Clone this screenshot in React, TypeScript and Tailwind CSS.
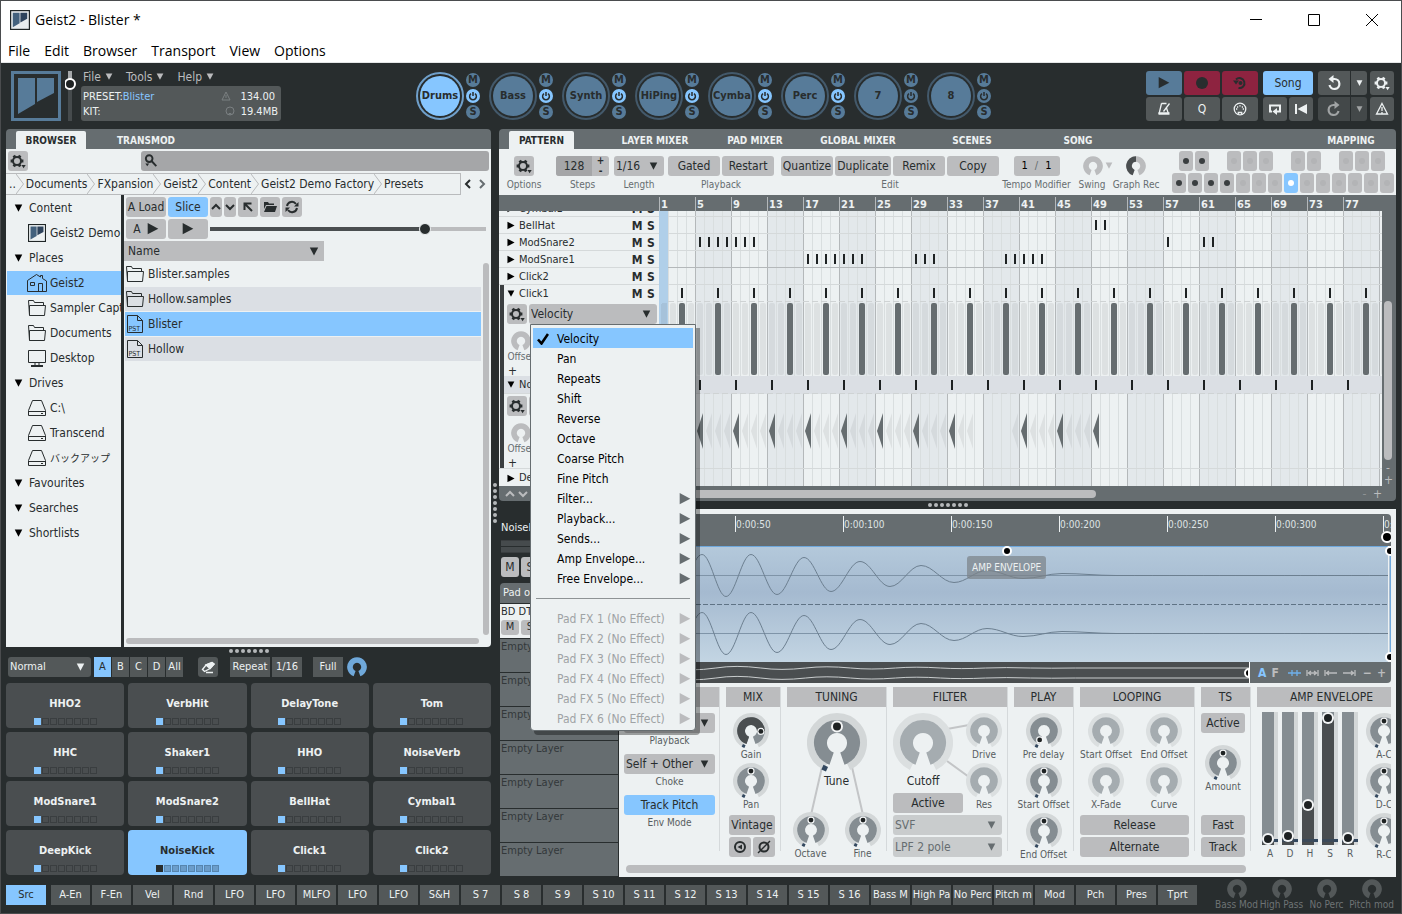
import type { ReactNode } from "react";
import clsx from "clsx";

const ENGINES = [
  { name: "Drums", on: true },
  { name: "Bass", on: true },
  { name: "Synth", on: true },
  { name: "HiPing", on: true },
  { name: "Cymba", on: true },
  { name: "Perc", on: true },
  { name: "7", on: false },
  { name: "8", on: false },
];

const PADS = [
  "HHO2", "VerbHit", "DelayTone", "Tom",
  "HHC", "Shaker1", "HHO", "NoiseVerb",
  "ModSnare1", "ModSnare2", "BellHat", "Cymbal1",
  "DeepKick", "NoiseKick", "Click1", "Click2",
];

const MOD_SOURCES = [
  "A-En", "F-En", "Vel", "Rnd", "LFO", "LFO", "MLFO", "LFO", "LFO", "S&H",
  "S 7", "S 8", "S 9", "S 10", "S 11", "S 12", "S 13", "S 14", "S 15", "S 16",
  "Bass M", "High Pa", "No Perc", "Pitch m", "Mod", "Pch", "Pres", "Tprt",
];

const MENU_ITEMS = [
  "Velocity", "Pan", "Repeats", "Shift", "Reverse", "Octave", "Coarse Pitch", "Fine Pitch",
  "Filter...", "Playback...", "Sends...", "Amp Envelope...", "Free Envelope...",
];

function range(from: number, to: number) {
  return Array.from({ length: to - from + 1 }, (_, i) => from + i);
}

// angle in degrees, 0 at twelve o'clock, clockwise
function polar(angle: number, r: number) {
  const a = (angle * Math.PI) / 180;
  return [30 + r * Math.sin(a), 30 - r * Math.cos(a)];
}

function arc(r: number, from: number, to: number) {
  const [x1, y1] = polar(from, r);
  const [x2, y2] = polar(to, r);
  return `M${x1} ${y1}A${r} ${r} 0 ${to - from > 180 ? 1 : 0} 1 ${x2} ${y2}`;
}

/* ---------- icons ---------- */

function Gear({ className }: { className?: string }) {
  return (
    <svg viewBox="0 0 20 20" className={clsx("size-5", className)} fill="none" stroke="currentColor">
      <circle cx="9" cy="10" r="4" strokeWidth="2" />
      <path strokeWidth="2.8" d="M15.4 10h-2.2M2.600 10h2.2M12.200 4.500l-1.100 1.900M5.800 4.500l1.100 1.900M12.200 15.500l-1.100-1.900M5.800 15.500l1.100-1.900" />
      <path d="M13.5 14h4.2l-2.1 3.2z" fill="currentColor" stroke="none" />
    </svg>
  );
}

function Down({ className = "w-[10px]" }: { className?: string }) {
  return (
    <svg viewBox="0 0 10 9" className={clsx("shrink-0", className)} fill="currentColor">
      <path d="M0.8 0.5h8.4L5 8.5z" />
    </svg>
  );
}

function Right({ className = "w-[9px]" }: { className?: string }) {
  return (
    <svg viewBox="0 0 9 10" className={clsx("shrink-0", className)} fill="currentColor">
      <path d="M0.5 0.8v8.4L8.5 5z" />
    </svg>
  );
}

function FolderIcon() {
  return (
    <svg viewBox="0 0 20 20" className="size-5 shrink-0" fill="none" stroke="currentColor">
      <path d="M2.5 17.5L1.500 2.500h5l1 2h9v3M2.500 17.500V7.500h16l-1 10z" />
    </svg>
  );
}

function PresetFileIcon() {
  return (
    <svg viewBox="0 0 20 20" className="size-5 shrink-0" fill="none" stroke="currentColor">
      <path d="M2.5 1.5h10l5 5v12h-15zM12.5 1.5v5h5" />
      <text x="3.5" y="16.5" fontSize="7" fill="currentColor" stroke="none" fontFamily="DejaVu Sans Condensed, sans-serif">PST</text>
    </svg>
  );
}

function HomeIcon() {
  return (
    <svg viewBox="0 0 22 20" className="h-5 w-[22px] shrink-0" fill="none" stroke="currentColor">
      <path d="M1.5 18.5v-11l9-6 4 2.5V2.5h2v3l4 2.5v10.5zM4.5 9.5h4v3h-4zM12.5 18.5v-8h4v8" />
    </svg>
  );
}

function MonitorIcon() {
  return (
    <svg viewBox="0 0 20 20" className="size-5 shrink-0" fill="none" stroke="currentColor">
      <path d="M1.5 2.5h17v12h-17zM8 14.5v3M12 14.5v3" />
      <path d="M4 18h12" strokeWidth="2" />
    </svg>
  );
}

function DriveIcon() {
  return (
    <svg viewBox="0 0 20 20" className="size-5 shrink-0" fill="none" stroke="currentColor">
      <path d="M5.5 2.5h9l4 10v5h-17v-5zM1.5 13.5h17M14 15.5h2" />
    </svg>
  );
}

function Logo({ className, frame, left, right, bg }: { className: string; frame: string; left: string; right: string; bg: string }) {
  return (
    <svg viewBox="0 0 50 50" className={clsx("shrink-0", className)}>
      <rect x="1.5" y="1.5" width="47" height="47" fill={bg} stroke={frame} strokeWidth="3" />
      <path d="M7 7h17v26L7 43z" fill={left} />
      <path d="M26 7h17v15L26 31z" fill={right} />
    </svg>
  );
}

function Chevron({ d, className }: { d: string; className?: string }) {
  return (
    <svg viewBox="0 0 10 10" className={clsx("size-[10px]", className)} fill="none" stroke="currentColor" strokeWidth="2">
      <path d={d} />
    </svg>
  );
}

function PowerIcon() {
  return (
    <svg viewBox="0 0 14 14" className="size-[14px]" fill="none" stroke="currentColor" strokeWidth="1.5">
      <path d="M5 4.6a3.400 3.400 0 1 0 4 0M7 3v4" />
    </svg>
  );
}

/* ---------- controls ---------- */

interface KnobProps {
  label?: string;
  name?: string;
  size?: "sm" | "lg";
  value?: number;
  filled?: boolean;
}

function Knob({ label, name, size = "sm", value, filled }: KnobProps) {
  const live = value !== undefined;
  const angle = live ? -154 + value * 308 : 0;
  const [dx, dy] = polar(angle, 16.5);
  const [mx, my] = polar(206, 28);
  const big = size === "lg";
  return (
    <label className={clsx("relative flex shrink-0 flex-col items-center", big ? "h-[76px] w-[60px]" : "h-[50px] w-[36px]")}>
      <input type="range" min={0} max={1} step={0.01} defaultValue={value ?? 0.5} aria-label={name ?? label} className="sr-only" />
      <svg viewBox="0 0 60 60" className={clsx("shrink-0", big ? "size-[60px]" : "size-9")} fill="none">
        <path d={arc(26.5, -154, 154)} stroke={live ? "#d3d7d8" : "#dbdfe0"} strokeWidth="7" />
        <path d={arc(16.5, -161, 161)} stroke={live ? "#858d92" : "#a5acb0"} strokeWidth="13" />
        {filled && <path d={arc(16.5, -161, angle)} stroke="#4a4e50" strokeWidth="13" />}
        {live && (
          <>
            <rect x={mx - 2.5} y={my - 2.5} width="5" height="5" fill="#33485f" transform={`rotate(25 ${mx} ${my})`} />
            <circle cx={dx} cy={dy} r="6" fill="#f4f6f7" />
            <circle cx={dx} cy={dy} r="4" fill="#1e2223" />
          </>
        )}
      </svg>
      <span className={clsx("whitespace-nowrap", big ? "text-[12px] leading-4" : "text-[10px] leading-3 text-[#575d60]")}>{label}</span>
    </label>
  );
}

function MiniKnob({ name, className, value }: { name: string; className: string; value?: number }) {
  return (
    <label className="relative block shrink-0">
      <input type="range" aria-label={name} className="sr-only" />
      <svg viewBox="0 0 60 60" className={clsx("size-5", className)} fill="none" stroke="currentColor">
        <path d={arc(21, -160, 160)} strokeWidth="17" />
        {value !== undefined && <path d={arc(21, -160, value)} stroke="#4a4e50" strokeWidth="17" />}
      </svg>
    </label>
  );
}

function Select({ name, value, className }: { name: string; value: string; className: string }) {
  return (
    <div className={clsx("relative flex h-5 items-center rounded-[3px]", className)}>
      <select aria-label={name} defaultValue={value} className="h-5 w-full appearance-none bg-transparent pl-[2px] leading-5 outline-none">
        <option>{value}</option>
      </select>
      <Down className="pointer-events-none absolute right-[6px] w-[9px]" />
    </div>
  );
}

function Btn({ children, className, label, tone = "grey" }: { children?: ReactNode; className?: string; label?: string; tone?: "grey" | "blue" | "dark" | "none" }) {
  return (
    <button
      type="button"
      aria-label={label}
      className={clsx(
        "flex shrink-0 items-center justify-center overflow-hidden whitespace-nowrap",
        tone === "grey" && "h-5 rounded-[3px] bg-[#bbbcbe]",
        tone === "blue" && "h-5 rounded-[3px] bg-[#86c6ff]",
        tone === "dark" && "h-5 bg-[#535859] text-[#edf1f2]",
        className
      )}
    >
      {children}
    </button>
  );
}

function Dots({ vertical }: { vertical?: boolean }) {
  return (
    <div className={clsx("flex items-center justify-center gap-[2px]", vertical ? "flex-col" : "h-2")}>
      {range(1, 7).map((i) => (
        <span key={i} className="size-1 rounded-full bg-[#b5b8ba]" />
      ))}
    </div>
  );
}

/* ---------- top ---------- */

function TitleBar() {
  return (
    <div className="bg-white font-['Open_Sans','Noto_Sans',sans-serif] text-[14px] text-black">
      <div className="flex h-[37px] items-center pl-[9px]">
        <Logo className="size-5" frame="#1f2526" bg="#e8ecee" left="#43617d" right="#2e435c" />
        <h1 className="ml-[5px]">Geist2 - Blister *</h1>
        <div className="ml-auto flex">
          {[
            { name: "Minimise", d: "M1 6.5h12" },
            { name: "Maximise", d: "M1.5 1.5h11v11h-11z" },
            { name: "Close", d: "M1 1l12 12M13 1L1 13" },
          ].map((b) => (
            <button key={b.name} type="button" aria-label={b.name} className="flex h-8 w-[58px] items-center justify-center">
              <svg viewBox="0 0 14 14" className="size-[14px]" fill="none" stroke="#000">
                <path d={b.d} />
              </svg>
            </button>
          ))}
        </div>
      </div>
      <nav className="flex h-[25px] items-center gap-[14px] border-b border-[#e4e6e7] pl-[7px]">
        {["File", "Edit", "Browser", "Transport", "View", "Options"].map((m) => (
          <button key={m} type="button">{m}</button>
        ))}
      </nav>
    </div>
  );
}

function Engine({ name, on, active }: { name: string; on: boolean; active: boolean }) {
  return (
    <div className="flex items-center gap-[2px]">
      <button
        type="button"
        className={clsx("flex size-12 items-center justify-center rounded-full border-2", active ? "border-[#6f9fca]" : "border-[#43596b]")}
      >
        <span className={clsx("flex size-10 items-center justify-center rounded-full text-[11px] font-bold", active ? "bg-[#86c6ff]" : "bg-[#577b99]")}>
          {name}
        </span>
      </button>
      <div className="flex flex-col gap-[2px] text-[11px] leading-[14px] font-bold">
        <button type="button" className="size-[14px] rounded-full bg-[#577b99]">M</button>
        <button type="button" aria-label={`${name} power`} className={clsx("size-[14px] rounded-full", on ? "bg-[#86c6ff]" : "bg-[#577b99]")}>
          <PowerIcon />
        </button>
        <button type="button" className="size-[14px] rounded-full bg-[#577b99]">S</button>
      </div>
    </div>
  );
}

function Transport() {
  const box = "h-6 rounded-[3px] bg-[#535859] text-[#edf1f2]";
  return (
    <div className="ml-auto flex items-start gap-[5px]">
      <div className="grid grid-cols-3 gap-[2px]">
        <Btn tone="none" label="Play" className="h-6 w-9 rounded-[3px] bg-[#577b99]"><Right className="w-3" /></Btn>
        <Btn tone="none" label="Record" className="h-6 w-9 rounded-[3px] bg-[#8e2340]"><span className="size-3 rounded-full bg-[#282d2e]" /></Btn>
        <Btn tone="none" label="Overdub" className="h-6 w-9 rounded-[3px] bg-[#8e2340]">
          <svg viewBox="0 0 16 16" className="size-4" fill="none" stroke="currentColor" strokeWidth="2">
            <path d="M4 4.500a5 5 0 1 1 2.500 8.500" />
            <path d="M1 5.500h6l-3 4z" fill="currentColor" stroke="none" />
            <circle cx="8.5" cy="8" r="2" fill="currentColor" stroke="none" />
          </svg>
        </Btn>
        <Btn tone="none" label="Metronome" className={clsx(box, "w-9")}>
          <svg viewBox="0 0 14 14" className="size-[14px]" fill="none" stroke="currentColor" strokeWidth="1.3">
            <path d="M4.5 1.5h5M4.500 1.500L2 12M9.500 6l2 6M6.500 9.500L12.500 1.500" />
            <path d="M1.500 11.5h11" strokeWidth="2.5" />
          </svg>
        </Btn>
        <Btn tone="none" className={clsx(box, "w-9")}>Q</Btn>
        <Btn tone="none" label="MIDI" className={clsx(box, "w-9")}>
          <svg viewBox="0 0 14 14" className="size-[14px]" fill="none" stroke="currentColor" strokeWidth="1.3">
            <circle cx="7" cy="7" r="5.800" />
            <path d="M5.3 12.500V10.500h3.400v2M3 7h1.300M9.700 7H11M6.300 3.800h1.400M4 5h1.200M8.800 5H10" />
          </svg>
        </Btn>
      </div>
      <div className="flex flex-col gap-[2px]">
        <Btn tone="none" className="h-6 w-[50px] rounded-[3px] bg-[#86c6ff]">Song</Btn>
        <div className="flex gap-[2px]">
          <Btn tone="none" label="Loop" className={clsx(box, "w-6")}>
            <svg viewBox="0 0 14 14" className="size-[14px]" fill="none" stroke="currentColor" strokeWidth="2">
              <path d="M4 9.5H2V3.500h10v6H8.500" />
              <path d="M4.500 9.5l4.500-3.500v7z" fill="currentColor" stroke="none" />
            </svg>
          </Btn>
          <Btn tone="none" label="Rewind" className={clsx(box, "w-6")}>
            <svg viewBox="0 0 14 14" className="size-[14px]" fill="currentColor">
              <path d="M1 2h2v10H1zM13 2v10L3.500 7z" />
            </svg>
          </Btn>
        </div>
      </div>
      <div className="flex flex-col gap-[2px]">
        {["Undo", "Redo"].map((n) => (
          <div key={n} className={clsx("flex gap-px", n === "Redo" && "text-[#a0a3a4]")}>
            <Btn tone="none" label={n} className={clsx("h-6 w-8 rounded-l-[3px]", n === "Undo" ? "bg-[#535859] text-[#edf1f2]" : "bg-[#434849]")}>
              <svg viewBox="0 0 16 16" className={clsx("size-4", n === "Redo" && "-scale-x-100")} fill="none" stroke="currentColor" strokeWidth="2.2">
                <path d="M5.500 4H8.500a5 5 0 1 1-5 6" />
                <path d="M7.500 0v8L2.500 4z" fill="currentColor" stroke="none" />
              </svg>
            </Btn>
            <Btn tone="none" label={`${n} history`} className={clsx("h-6 w-4 rounded-r-[3px]", n === "Undo" ? "bg-[#535859] text-[#edf1f2]" : "bg-[#434849]")}>
              <Down className="w-[7px]" />
            </Btn>
          </div>
        ))}
      </div>
      <div className="-ml-[2px] flex flex-col gap-[2px]">
        <Btn tone="none" label="Preferences" className={clsx(box, "w-6")}><Gear /></Btn>
        <Btn tone="none" label="Panic" className={clsx(box, "w-6")}>
          <svg viewBox="0 0 14 14" className="size-[14px]" fill="none" stroke="currentColor" strokeWidth="1.3">
            <path d="M7 1.5l5.5 10.5h-11zM7 5v4M7 10v1.3" />
          </svg>
        </Btn>
      </div>
    </div>
  );
}

function Header() {
  return (
    <header className="flex h-[66px] pt-2 pr-[7px] pl-[10px]">
      <Logo className="size-[50px]" frame="#577b99" bg="#282d2e" left="#577b99" right="#577b99" />
      <label className="relative ml-1 h-[50px] w-[10px]">
        <input type="range" aria-label="Master volume" className="sr-only" />
        <svg viewBox="0 0 12 50" className="h-[50px] w-[12px]">
          <path d="M3 0h4v8H3z" fill="#a5a8aa" />
          <path d="M3 18h4v32H3z" fill="#464b4d" />
          <circle cx="5" cy="13" r="5" fill="#1e2223" stroke="#fff" strokeWidth="2" />
        </svg>
      </label>
      <div className="ml-[6px] w-[200px]">
        <div className="flex h-[15px] items-start gap-[13px] pl-[2px] text-[#bbbcbe]">
          {["File", "Tools", "Help"].map((m) => (
            <button key={m} type="button" className="flex items-center gap-1 leading-3">
              {m}
              <Down className="w-2" />
            </button>
          ))}
        </div>
        <dl className="flex h-[35px] flex-col justify-center rounded-[3px] bg-[#535859] pr-[3px] pl-[2px] text-[11px] leading-[15px] text-[#edf1f2]">
          <div className="flex">
            <dt>PRESET:</dt>
            <dd className="flex flex-1 text-[#86c6ff]">Blister</dd>
            <dd className="flex items-center gap-[9px] pr-[3px]">
              <svg viewBox="0 0 10 10" className="size-[10px]" fill="none" stroke="#7b8082"><path d="M5 1l4 8H1zM5 4v3" /></svg>
              134.00
            </dd>
          </div>
          <div className="flex">
            <dt>KIT:</dt>
            <dd className="ml-auto flex items-center gap-[6px]">
              <svg viewBox="0 0 10 10" className="size-[10px]" fill="none" stroke="#7b8082"><circle cx="5" cy="5" r="4" /><path d="M4 9V7.5h2V9" /></svg>
              19.4MB
            </dd>
          </div>
        </dl>
      </div>
      <div className="ml-[135px] flex h-[50px] items-center gap-[9px]">
        {ENGINES.map((e, i) => (
          <Engine key={e.name} {...e} active={i === 0} />
        ))}
      </div>
      <Transport />
    </header>
  );
}

/* ---------- browser ---------- */

const CRUMBS = ["..", "Documents", "FXpansion", "Geist2", "Content", "Geist2 Demo Factory", "Presets"];

const TREE: { label: string; icon?: ReactNode; active?: boolean; small?: boolean }[] = [
  { label: "Content" },
  { label: "Geist2 Demo", icon: <Logo className="size-[18px]" frame="#1f2526" bg="#edf1f2" left="#43617d" right="#2e435c" /> },
  { label: "Places" },
  { label: "Geist2", icon: <HomeIcon />, active: true },
  { label: "Sampler Capt", icon: <FolderIcon /> },
  { label: "Documents", icon: <FolderIcon /> },
  { label: "Desktop", icon: <MonitorIcon /> },
  { label: "Drives" },
  { label: "C:\\", icon: <DriveIcon /> },
  { label: "Transcend", icon: <DriveIcon /> },
  { label: "バックアップ", icon: <DriveIcon />, small: true },
  { label: "Favourites" },
  { label: "Searches" },
  { label: "Shortlists" },
];

const FILES = [
  { name: "Blister.samples", folder: true },
  { name: "Hollow.samples", folder: true },
  { name: "Blister", active: true },
  { name: "Hollow" },
];

function BrowserPanel() {
  return (
    <section className="flex min-h-0 flex-1 flex-col">
      <div className="flex h-5 items-end rounded-t-[4px] bg-[#666d70] pl-[10px] text-[10px] font-bold text-[#edf1f2]">
        <button type="button" className="h-[18px] w-[70px] rounded-t-[2px] bg-[#edf1f2] text-[#282d2e]">BROWSER</button>
        <button type="button" className="ml-[20px] h-[18px] w-20">TRANSMOD</button>
      </div>
      <div className="flex h-6 items-center justify-between bg-[#edf1f2] px-[2px]">
        <Btn label="Browser options" className="w-5"><Gear /></Btn>
        <label className="ml-[113px] flex h-5 flex-1 items-center rounded-[3px] bg-[#a5a6a8]">
          <svg viewBox="0 0 16 16" className="ml-[2px] size-4" fill="none" stroke="#282d2e" strokeWidth="2">
            <circle cx="6.5" cy="5.5" r="3.5" />
            <path d="M9 8l5 5.5" />
            <path d="M2.5 10.5h4l-2 3z" fill="#282d2e" stroke="none" />
          </svg>
          <input type="search" aria-label="Search" className="w-full bg-transparent outline-none" />
        </label>
      </div>
      <nav className="flex h-[22px] items-center bg-[#edf1f2]">
        <div className="flex h-[22px] flex-1 items-center overflow-hidden border-y border-r border-[#b9bbbd] pl-px">
          {CRUMBS.map((c, i) => (
            <span key={c} className="flex shrink-0 items-center">
              <a href="#" className="pl-[2px]">{c}</a>
              {i < CRUMBS.length - 1 && (
                <svg viewBox="0 0 8 20" className="h-5 w-2" fill="none" stroke="#b9bbbd"><path d="M0 0l7.5 10L0 20" /></svg>
              )}
            </span>
          ))}
        </div>
        <Btn tone="none" label="Back" className="w-[14px]"><Chevron d="M7 1L3 5l4 4" className="size-[9px]" /></Btn>
        <Btn tone="none" label="Forward" className="mr-[2px] w-[14px] text-[#666d70]"><Chevron d="M3 1l4 4-4 4" className="size-[9px]" /></Btn>
      </nav>
      <div className="flex min-h-0 flex-1 gap-[3px]">
        <ul className="w-[115px] overflow-hidden bg-[#edf1f2] pl-px">
          {TREE.map((t) => (
            <li key={t.label + (t.icon ? "i" : "")} className="h-[25px] pt-px">
              <button type="button" className={clsx("flex h-6 w-full items-center gap-[3px] whitespace-nowrap", t.icon ? "pl-[20px]" : "pl-[7px]", t.active && "bg-[#86c6ff]")}>
                {t.icon ? <span className="flex w-5 justify-center">{t.icon}</span> : <Down className="mr-[3px] w-[9px] text-black" />}
                <span className={clsx(t.small && "text-[10px]")}>{t.label}</span>
              </button>
            </li>
          ))}
        </ul>
        <div className="flex min-w-0 flex-1 flex-col rounded-br-[4px] bg-[#edf1f2]">
          <div className="flex h-6 items-center gap-[2px] pl-[2px]">
            <Btn className="w-10">A Load</Btn>
            <Btn tone="blue" className="w-10">Slice</Btn>
            <Btn label="Previous" className="w-3"><Chevron d="M1 7l4-4 4 4" /></Btn>
            <Btn label="Next" className="w-3"><Chevron d="M1 3l4 4 4-4" /></Btn>
            <Btn label="Parent folder" className="w-5">
              <Chevron d="M9 9L2 2M1.500 8V1.5h7" />
            </Btn>
            <Btn label="Open folder" className="w-5">
              <svg viewBox="0 0 14 12" className="w-[14px]" fill="currentColor"><path d="M1 1h4l1 1.5h5V4H3L1 8zM3.5 5H14l-2 6H1z" /></svg>
            </Btn>
            <Btn label="Refresh" className="w-5">
              <svg viewBox="0 0 14 14" className="size-[14px]" fill="none" stroke="currentColor" strokeWidth="2">
                <path d="M2 6a5 5 0 0 1 9-2M12 8a5 5 0 0 1-9 2" />
                <path d="M13.5 2v4.5H9zM0.5 12V7.5H5z" fill="currentColor" stroke="none" />
              </svg>
            </Btn>
          </div>
          <div className="flex h-[22px] items-start gap-[2px] pl-[2px]">
            <Btn className="w-10 gap-[6px]">A <Right className="w-3" /></Btn>
            <Btn label="Preview" className="w-10"><Right className="w-3" /></Btn>
            <input
              type="range"
              aria-label="Preview volume"
              defaultValue={79}
              className="mt-2 mr-[5px] h-1 min-w-0 flex-1 appearance-none bg-linear-to-r from-[#4a4e50] from-78% to-[#bbbcbe] to-78% [&::-webkit-slider-thumb]:size-3 [&::-webkit-slider-thumb]:appearance-none [&::-webkit-slider-thumb]:rounded-full [&::-webkit-slider-thumb]:border [&::-webkit-slider-thumb]:border-[#edf1f2] [&::-webkit-slider-thumb]:bg-[#282d2e]"
            />
          </div>
          <div className="flex min-h-0 flex-1 pr-[2px]">
            <table className="mr-[2px] w-full self-start">
              <thead>
                <tr>
                  <th className="p-0 text-left font-normal">
                    <button type="button" className="flex h-5 w-[200px] items-center justify-between bg-[#bbbcbe] pr-[5px] pl-1">
                      Name <Down />
                    </button>
                  </th>
                </tr>
              </thead>
              <tbody>
                {FILES.map((f, i) => (
                  <tr key={f.name}>
                    <td className="p-0 pt-px pl-px">
                      <div className={clsx("flex h-6 items-center gap-[3px]", f.active ? "bg-[#86c6ff]" : i % 2 === 1 && "bg-[#dbdfe4]")}>
                        {f.folder ? <FolderIcon /> : <PresetFileIcon />}
                        {f.name}
                      </div>
                    </td>
                  </tr>
                ))}
              </tbody>
            </table>
            <div className="mt-[22px] w-[6px] shrink-0 rounded-full bg-[#bbbcbe]" />
          </div>
          <div className="my-[3px] mr-3 ml-[2px] h-[6px] shrink-0 rounded-full bg-[#bbbcbe]" />
        </div>
      </div>
    </section>
  );
}

function PadSection() {
  return (
    <section className="pb-[2px]">
      <div className="mt-[2px] flex h-5 items-center pl-[2px]">
        <Select name="Pad view" value="Normal" className="w-[83px] bg-[#535859] text-[11px] text-[#edf1f2]" />
        <div className="ml-[3px] flex gap-px text-[11px]">
          {["A", "B", "C", "D", "All"].map((b) => (
            <Btn key={b} tone="dark" className={clsx("w-[17px]", b === "A" && "bg-[#86c6ff]! text-[#282d2e]!")}>{b}</Btn>
          ))}
        </div>
        <Btn tone="dark" label="Erase" className="ml-[15px] w-5 rounded-[3px]">
          <svg viewBox="0 0 14 14" className="size-[14px]" fill="none" stroke="currentColor" strokeWidth="1.4">
            <path d="M1.5 9.5L5 5l6-2.5 2 1.5L9 8.5l-5.5 3zM5 12.5h7" />
            <path d="M5 5l6-2.5 2 1.5L9 8.5z" fill="currentColor" />
          </svg>
        </Btn>
        <Btn tone="dark" className="ml-3 w-10 text-[11px]">Repeat</Btn>
        <Btn tone="dark" className="ml-[2px] w-[30px] text-[11px]">1/16</Btn>
        <Btn tone="dark" className="mr-1 ml-[11px] w-[30px] text-[11px]">Full</Btn>
        <MiniKnob name="Pad velocity" className="text-[#6fa8da]" />
      </div>
      <div className="mt-[6px] grid grid-cols-4 gap-1">
        {PADS.map((p) => {
          const active = p === "NoiseKick";
          return (
            <button
              key={p}
              type="button"
              className={clsx("flex h-[45px] flex-col items-center rounded-[4px] pt-[14px] text-[11px] leading-[14px] font-bold", active ? "bg-[#86c6ff]" : "bg-[#4a4e50] text-[#edf1f2]")}
            >
              {p}
              <span className="mt-[7px] flex gap-px">
                {range(0, 7).map((i) => (
                  <span
                    key={i}
                    className={clsx(
                      "size-[7px]",
                      active
                        ? i === 0 ? "bg-[#282d2e]" : "border border-[#5685ae] bg-[#6b9dca]"
                        : i === 0 ? "bg-[#86c6ff]" : "border border-[#3a3e40]"
                    )}
                  />
                ))}
              </span>
            </button>
          );
        })}
      </div>
    </section>
  );
}

/* ---------- pattern ---------- */

function Field({ label, children, className }: { label: string; children: ReactNode; className?: string }) {
  return (
    <div className={clsx("flex flex-col items-center pt-[7px]", className)}>
      <div className="flex h-5 items-center gap-[2px]">{children}</div>
      <span className="mt-[2px] text-[10px] leading-[14px] whitespace-nowrap text-[#666d70]">{label}</span>
    </div>
  );
}

function MiniPad({ dot, active }: { dot?: boolean; active?: boolean }) {
  return (
    <button type="button" aria-label="Pattern slot" className={clsx("flex h-5 w-[14px] items-center justify-center rounded-[3px]", active ? "bg-[#86c6ff]" : "bg-[#bbbcbe]")}>
      <span className={clsx("size-[6px] rounded-full", active ? "bg-white" : dot ? "bg-[#3a3e40]" : "bg-[#b3b4b6]")} />
    </button>
  );
}

function PatternToolbar() {
  return (
    <div className="flex h-[46px] bg-[#edf1f2] pr-[2px] pl-2">
      <Field label="Options" className="w-[34px]"><Btn label="Pattern options" className="w-5"><Gear /></Btn></Field>
      <Field label="Steps" className="ml-[15px]">
        <div className="flex h-5 overflow-hidden rounded-[3px] bg-[#bbbcbe]">
          <input aria-label="Steps" defaultValue="128" className="w-9 bg-[#a5a6a8] text-center outline-none" />
          <div className="flex w-[17px] flex-col text-center text-[10px] leading-[10px] font-bold">
            <button type="button">+</button>
            <button type="button">-</button>
          </div>
        </div>
      </Field>
      <Field label="Length" className="ml-[5px]"><Select name="Length" value="1/16" className="w-[50px] bg-[#bbbcbe]" /></Field>
      <Field label="Playback" className="ml-1">
        <Btn className="w-[52px]">Gated</Btn>
        <Btn className="w-[52px]">Restart</Btn>
      </Field>
      <Field label="Edit" className="ml-[7px]">
        <Btn className="w-[52px]">Quantize</Btn>
        <Btn className="w-[56px]">Duplicate</Btn>
        <Btn className="w-[52px]">Remix</Btn>
        <Btn className="w-[52px]">Copy</Btn>
      </Field>
      <Field label="Tempo Modifier" className="ml-[3px] w-[69px]">
        <div className="flex h-5 w-[46px] items-center justify-center gap-[7px] rounded-[3px] bg-[#bbbcbe] text-[11px] text-black">
          <span>1</span><span className="text-[#666d70]">/</span><span>1</span>
        </div>
      </Field>
      <Field label="Swing" className="ml-[7px] w-[28px]">
        <MiniKnob name="Swing" className="ml-3 text-[#bbbcbe]" />
        <Down className="w-2 text-[#bbbcbe]" />
      </Field>
      <Field label="Graph Rec" className="ml-[7px] w-[46px]"><MiniKnob name="Graph record" className="text-[#bbbcbe]" value={0} /></Field>
      <div className="ml-auto flex flex-col gap-[2px] pt-[2px]">
        <div className="flex gap-[2px] pl-[7px]">
          {range(0, 12).map((i) =>
            [2, 6, 9].includes(i) ? <span key={i} className="w-[14px]" /> : <MiniPad key={i} dot={i < 2} />
          )}
        </div>
        <div className="flex gap-[2px]">
          {range(0, 13).map((i) => <MiniPad key={i} dot={i < 4} active={i === 7} />)}
        </div>
      </div>
    </div>
  );
}

function LaneMenu() {
  return (
    <ul role="menu" className="absolute top-full left-px z-50 w-[166px] rounded-b-[4px] border border-[#666d70] bg-[#edf1f2] px-[2px] pt-[3px] pb-[2px] text-black shadow-[4px_4px_0_rgba(0,0,0,0.35)]">
      {MENU_ITEMS.map((m, i) => (
        <li key={m} role="menuitem" className={clsx("flex h-5 items-center pt-px pr-[2px]", i === 0 && "bg-[#86c6ff]")}>
          <span className="flex w-6 justify-center pr-1">
            {i === 0 && (
              <svg viewBox="0 0 12 12" className="size-3" fill="none" stroke="#000" strokeWidth="2.6"><path d="M1 6.5l3.5 4L11 1" /></svg>
            )}
          </span>
          <span className="flex-1">{m}</span>
          {i > 7 && <Right className="w-3 text-[#666d70]" />}
        </li>
      ))}
      <li role="separator" className="mx-[3px] mt-[10px] mb-[9px] h-px bg-[#8e9395]" />
      {range(1, 6).map((n) => (
        <li key={n} role="menuitem" aria-disabled className="flex h-5 items-center pt-px pr-[2px] pl-6 text-[#9fa3a5]">
          <span className="flex-1">{`Pad FX ${n} (No Effect)`}</span>
          <Right className="w-3 text-[#bbbcbe]" />
        </li>
      ))}
    </ul>
  );
}

function TrackRow({ name, open, className }: { name: string; open?: boolean; className?: string }) {
  return (
    <div className={clsx("flex h-[17px] shrink-0 items-center border-b border-[#d5d9da] pt-px pr-px text-[11px] leading-4", className)}>
      <button type="button" aria-label={`Toggle ${name}`} className="mr-1 text-black">
        {open ? <Down className="w-2" /> : <Right className="w-2" />}
      </button>
      <span className="flex-1">{name}</span>
      <button type="button" className="w-[14px] text-[12px] font-bold">M</button>
      <button type="button" className="w-[14px] text-[12px] font-bold">S</button>
    </div>
  );
}

function LaneControls({ value, menu, className }: { value: string; menu?: boolean; className: string }) {
  return (
    <div className={clsx("pt-[2px] pl-[3px]", className)}>
      <div className="flex gap-[2px]">
        <Btn label="Lane options" className="w-5"><Gear /></Btn>
        <div className="relative flex-1 pr-[2px]">
          <Select name="Lane" value={value} className="w-full bg-[#bbbcbe]" />
          {menu && <LaneMenu />}
        </div>
      </div>
      <div className="mt-[7px] flex w-7 flex-col items-center text-[10px] leading-3 text-[#666d70]">
        <MiniKnob name={`${value} offset`} className="text-[#bbbcbe]" />
        Offset
      </div>
      <button type="button" className="block pl-[1px] text-[12px] leading-4">+</button>
    </div>
  );
}

function TrackHeaders() {
  return (
    <div className="flex w-[160px] shrink-0 flex-col bg-[#edf1f2]">
      <div className="flex h-[6px] items-end overflow-hidden">
        <TrackRow name="Cymbal1" className="w-full pl-2" />
      </div>
      {["BellHat", "ModSnare2", "ModSnare1", "Click2"].map((t) => (
        <TrackRow key={t} name={t} className="pl-2" />
      ))}
      <div className="ml-px border-l-4 border-[#3a3e40]">
        <TrackRow name="Click1" open className="border-b-0! pl-[3px]" />
        <LaneControls value="Velocity" menu className="h-[74px]" />
      </div>
      <div className="ml-px border-l-4 border-[#3a3e40]">
        <TrackRow name="NoiseKick" open className="h-[18px]! bg-[#dbdfe4] pl-[3px]" />
        <LaneControls value="Reverse" className="h-[74px]" />
      </div>
      <TrackRow name="DeepKick" className="h-[18px]! border-t border-b-0! pl-2" />
    </div>
  );
}

const STEP = 9;
const STEPS = range(0, 199);
const HITS = [
  { y: 14, steps: [48, 49] },
  { y: 31, steps: [...range(4, 10), 56, 60, 61] },
  { y: 48, steps: [...range(16, 22), 28, 29, 30, ...range(38, 42)] },
  { y: 82, steps: STEPS.filter((s) => s % 4 === 2) },
  { y: 174, steps: STEPS.filter((s) => s % 4 === 0) },
];

function StepGrid() {
  return (
    <svg className="h-[275px] w-full bg-[#edf1f2]" shapeRendering="crispEdges">
      {STEPS.filter((s) => s % 8 === 4).map((s) => (
        <rect key={s} x={s * STEP} width={STEP * 4} height="275" fill="#e3e8eb" />
      ))}
      {STEPS.map((s) => (
        <rect key={s} x={s * STEP} width="1" height="275" fill={s % 4 ? "#d9dedf" : "#b4b8ba"} />
      ))}
      {[5, 22, 39, 73, 257].map((y) => (
        <rect key={y} y={y} width="100%" height="1" fill="#d5d9da" />
      ))}
      <rect y="56" width="100%" height="1" fill="#b4b8ba" />
      <rect y="165" width="100%" height="18" fill="#dbdfe4" />
      {[90, 182].map((y) => (
        <path key={y} d={`M0 ${y}.5h1800`} stroke="#cfd3d4" strokeDasharray="6 3" />
      ))}
      {STEPS.map((s) => (
        <rect
          key={s}
          x={s * STEP + 2}
          y="92"
          width="6"
          height="72"
          rx="2"
          shapeRendering="auto"
          fill={s % 4 === 2 ? "#666d70" : s % 8 > 3 ? "#d5dadd" : "#dde1e2"}
        />
      ))}
      {[...range(4, 34), ...range(39, 48)].map((s) => (
        <path
          key={s}
          d={`M${s * STEP + 2} 220l6-18v36z`}
          shapeRendering="auto"
          fill={s % 4 === 0 ? "#666d70" : s % 8 > 3 ? "#d5dadd" : "#dde1e2"}
        />
      ))}
      <rect width="9" height="165" fill="#b0cfe9" />
      <rect x="2" y="92" width="6" height="72" rx="2" fill="#a6c2da" />
      {HITS.map((h) => h.steps.map((s) => <rect key={`${h.y}-${s}`} x={s * STEP + 4} y={h.y - 5} width="2" height="10" fill="#1e2223" />))}
    </svg>
  );
}

function PatternPanel() {
  const tabs = [
    { name: "LAYER MIXER", cls: "ml-[31px] w-[100px]" },
    { name: "PAD MIXER", cls: "w-[100px]" },
    { name: "GLOBAL MIXER", cls: "w-[106px]" },
    { name: "SCENES", cls: "ml-[20px] w-[82px]" },
    { name: "SONG", cls: "ml-[22px] w-[86px]" },
  ];
  return (
    <section className="flex flex-col">
      <div className="flex h-5 items-end rounded-t-[4px] bg-[#666d70] pl-[10px] text-[10px] font-bold text-[#edf1f2]">
        <button type="button" className="h-[18px] w-[65px] rounded-t-[2px] bg-[#edf1f2] text-[#282d2e]">PATTERN</button>
        {tabs.map((t) => (
          <button key={t.name} type="button" className={clsx("h-[18px] shrink-0", t.cls)}>{t.name}</button>
        ))}
        <button type="button" className="mr-[14px] ml-auto h-[18px] w-[62px]">MAPPING</button>
      </div>
      <PatternToolbar />
      <div className="flex bg-[#666d70]">
        <div className="min-w-0 flex-1">
          <div className="flex h-4 overflow-hidden pl-[160px] text-[11px] leading-[15px] font-bold text-[#edf1f2]">
            {range(0, 19).map((i) => (
              <span key={i} className="mt-[2px] w-9 shrink-0 border-l border-[#b4b8ba] pl-[1px]">{i * 4 + 1}</span>
            ))}
          </div>
          <div className="flex">
            <TrackHeaders />
            <div className="min-w-0 flex-1"><StepGrid /></div>
          </div>
        </div>
        <div className="flex w-[14px] flex-col items-start pl-[2px] text-[12px] leading-3 text-[#bbbcbe]">
          <div className="mt-[106px] h-[159px] w-2 rounded-full bg-[#bbbcbe]" />
          <button type="button" className="mt-[2px] w-2">-</button>
          <button type="button" className="w-2">+</button>
        </div>
      </div>
      <div className="flex h-[15px] items-center rounded-b-[4px] bg-[#666d70] pr-3 pl-1 text-[#bbbcbe]">
        <Btn tone="none" label="Up" className="w-[13px]"><Chevron d="M1 7l4-4 4 4" className="size-[9px]" /></Btn>
        <Btn tone="none" label="Down" className="w-[13px]"><Chevron d="M1 3l4 4 4-4" className="size-[9px]" /></Btn>
        <div className="ml-[10px] flex-1"><div className="h-2 w-[68%] rounded-full bg-[#bbbcbe]" /></div>
        <button type="button" className="w-[13px] leading-3 text-[#8e9395]">-</button>
        <button type="button" className="w-[13px] leading-3">+</button>
      </div>
    </section>
  );
}

/* ---------- layer list ---------- */

function LayerList() {
  return (
    <aside className="flex w-[120px] shrink-0 flex-col pr-px pl-px text-[11px]">
      <div className="h-[31px] pt-[11px] pl-px leading-4 text-[#edf1f2]">NoiseKick</div>
      <div className="ml-px h-[13px] border-y border-[#3a3e40] bg-[#464b4d] pt-[5px]"><div className="h-px bg-[#282d2e]" /></div>
      <div className="mt-[4px] flex h-[26px] gap-[2px] pl-px">
        <Btn className="w-[18px] text-[12px]">M</Btn>
        <Btn className="w-[18px] text-[12px]">S</Btn>
      </div>
      <div className="h-5 rounded-tl-[4px] bg-[#666d70] pl-[3px] leading-5 text-[#edf1f2]">Pad output</div>
      <div className="mt-px h-[34px] bg-[#edf1f2] pl-px">
        <div className="h-4 leading-[15px] whitespace-nowrap">BD DT Kick</div>
        <div className="flex gap-[2px]">
          <Btn className="h-[15px]! w-[18px]">M</Btn>
          <Btn className="h-[15px]! w-[18px]">S</Btn>
        </div>
      </div>
      {range(1, 7).map((n) => (
        <div key={n} className="h-[34px] border-t border-[#282d2e] bg-[#666d70] pl-px leading-4 text-[#33383a]">Empty Layer</div>
      ))}
    </aside>
  );
}

/* ---------- sample editor ---------- */

// x and offset from the centre line of each crest and trough
const EXTREMES = [
  [0, 0], [26, -21], [50, 21], [76, -21], [100, 21], [125, -21], [151, 19], [178, -18], [205, 16], [234, -14],
  [264, 11], [295, -10], [328, 7], [361, -5], [397, 3], [436, -2], [490, 0], [762, 0],
];

function wave(mid: number) {
  return EXTREMES.map(([x, dy], i) => {
    const y = mid + dy;
    if (i === 0) return `M${x} ${y}`;
    const [px, pdy] = EXTREMES[i - 1];
    const k = (x - px) * 0.37;
    return `C${px + k} ${mid + pdy} ${x - k} ${y} ${x} ${y}`;
  }).join("");
}

function ripple(y: number) {
  let d = `M0 ${y}`;
  for (let i = 0; i < 10; i++) {
    const a = 4 - i * 0.4;
    d += `q20 ${i % 2 ? a : -a} 45 0`;
  }
  return `${d}H624`;
}

function SampleEditor() {
  const tools = [
    { name: "Zoom to fit", d: "M0 6h4M9 6h4M4 3v6M9 3v6M4 6h5", blue: true },
    { name: "Loop region", d: "M1 3v6M12 3v6M2 6h9M5 4L2.5 6 5 8M8 4l2.5 2L8 8" },
    { name: "Start marker", d: "M1 3v6M2 6h11M5 4L2.5 6 5 8" },
    { name: "End marker", d: "M12 3v6M0 6h11M8 4l2.5 2L8 8" },
  ];
  return (
    <div className="relative">
      <div className="flex h-8 overflow-hidden rounded-t-[4px] bg-[#666d70] pl-px text-[10px] leading-[18px] text-[#dfe3e4]">
        {["0:00:00", "0:00:50", "0:00:100", "0:00:150", "0:00:200", "0:00:250", "0:00:300", "0:00:350"].map((t) => (
          <span key={t} className="mt-[2px] h-4 w-[108px] shrink-0 border-l border-[#edf1f2]">{t}</span>
        ))}
      </div>
      <svg viewBox="0 0 765 116" preserveAspectRatio="none" className="block h-[116px] w-full" fill="none">
        <defs>
          <linearGradient id="wave-bg" x1="0" y1="0" x2="0" y2="1">
            <stop offset="0" stopColor="#b4c9db" />
            <stop offset="0.4" stopColor="#a5bad0" />
            <stop offset="1" stopColor="#c3d5e3" />
          </linearGradient>
        </defs>
        <rect width="765" height="116" fill="url(#wave-bg)" />
        <path d="M0 0.5h765M764.5 0v116" stroke="#6fa8dc" />
        <path d="M762.5 0v116" stroke="#edf1f2" />
        <path d="M0 29.5h762M0 87.5h762" stroke="#7f94a8" />
        <path d="M0 58.5h762" stroke="#5f7385" strokeDasharray="5 2" />
        <path d={wave(29.5)} stroke="#6c7f90" />
        <path d={wave(87.5)} stroke="#6c7f90" />
      </svg>
      <span className="absolute top-[42px] left-[341px] h-[23px] rounded-[3px] bg-[#7a8288]/70 px-[5px] text-[10px] leading-[23px] text-[#edf1f2]">AMP ENVELOPE</span>
      <span className="absolute top-[32px] left-[376px] size-[10px] rounded-full border-2 border-white bg-black" />
      <div className="absolute inset-y-0 right-0 w-[10px] overflow-hidden">
        <span className="absolute top-[17px] left-0 size-3 rounded-full border-2 border-white bg-black" />
        <span className="absolute top-[32px] left-1 size-[10px] rounded-full border-2 border-white bg-black" />
        <span className="absolute top-[138px] left-1 size-[10px] rounded-full border-2 border-white bg-black" />
      </div>
      <div className="flex h-[21px] overflow-hidden rounded-b-[4px] bg-[#666d70]">
        <div className="min-w-0 flex-1 border-r border-white bg-[#4a4e50]">
          <svg viewBox="0 0 624 21" preserveAspectRatio="none" className="h-[21px] w-full" fill="none" stroke="#c9cdce">
            <path d={ripple(6)} />
            <path d={ripple(16)} />
            <path d="M624 7a4 4 0 0 0 0 8z" fill="#000" stroke="#fff" strokeWidth="2" />
          </svg>
        </div>
        <div className="flex w-[141px] shrink-0 items-center justify-between pr-[5px] pl-2 text-[12px] font-bold text-[#bbbcbe]">
          <button type="button" className="text-[#86c6ff]">A</button>
          <button type="button" className="mr-[4px]">F</button>
          {tools.map((t) => (
            <button key={t.name} type="button" aria-label={t.name} className={clsx(t.blue && "text-[#6fb0ea]")}>
              <svg viewBox="0 0 13 12" className="w-[13px]" fill="none" stroke="currentColor" strokeWidth="1.3"><path d={t.d} /></svg>
            </button>
          ))}
          <button type="button" className="ml-[2px] leading-4">−</button>
          <button type="button" className="leading-4">+</button>
        </div>
      </div>
    </div>
  );
}

/* ---------- parameters ---------- */

function Module({ title, className, children }: { title: string; className: string; children: ReactNode }) {
  return (
    <section className={clsx("h-[164px] shrink-0 border-r border-[#d5d9db]", className)}>
      <h2 className="h-5 bg-[#bbbcbe] text-center leading-[21px]">{title}</h2>
      {children}
    </section>
  );
}

const ENV = [
  { name: "A", pos: 127 },
  { name: "D", pos: 124 },
  { name: "H", pos: 93 },
  { name: "S", pos: 6 },
  { name: "R", pos: 126 },
];

function EnvSlider({ name, pos }: { name: string; pos: number }) {
  return (
    <label className="relative flex w-4 flex-col items-center text-[10px] leading-[17px] text-[#575d60]">
      <input type="range" min={0} max={133} defaultValue={133 - pos} aria-label={name} className="sr-only" />
      <svg viewBox="0 0 16 133" className="h-[133px] w-4">
        <rect width="12" height="133" fill="#858d92" />
        <rect x="12" width="4" height="133" fill="#d3d7d8" />
        <rect y={pos} width="12" height={133 - pos} fill="#4a4e50" />
        <rect x="12" y="127" width="4" height="3" fill="#33485f" />
        <rect y="127" width="12" height="3" fill="#33485f" opacity="0.6" />
        <circle cx="6" cy={pos} r="6" fill="#f4f6f7" />
        <circle cx="6" cy={pos} r="4" fill="#1e2223" />
      </svg>
      {name}
    </label>
  );
}

function Caption({ children }: { children: string }) {
  return <p className="h-[21px] text-center text-[10px] leading-4 text-[#575d60]">{children}</p>;
}

function Parameters() {
  return (
    <div className="-ml-[2px] flex h-[174px] gap-[6px] overflow-hidden">
      <Module title="" className="w-24">
        <div className="pt-[6px] pr-[4px]">
          <Select name="Playback" value="Mono" className="w-full bg-[#bbbcbe]" />
          <Caption>Playback</Caption>
          <Select name="Choke" value="Self + Other" className="w-full bg-[#bbbcbe]" />
          <Caption>Choke</Caption>
          <Btn tone="blue" className="w-full">Track Pitch</Btn>
          <Caption>Env Mode</Caption>
        </div>
      </Module>
      <Module title="MIX" className="w-[55px]">
        <div className="flex w-[50px] flex-col items-center pt-[6px]">
          <Knob label="Gain" value={0.8} filled />
          <Knob label="Pan" value={0.5} />
          <Btn className="mt-[2px] ml-[2px] w-[46px]">Vintage</Btn>
          <div className="mt-[2px] ml-[2px] flex gap-[2px]">
            <Btn label="Reverse" className="w-[22px]">
              <svg viewBox="0 0 14 14" className="size-[14px]" fill="none" stroke="currentColor" strokeWidth="2">
                <circle cx="7" cy="7" r="5" />
                <path d="M9 4.5v5L4.5 7z" fill="currentColor" stroke="none" />
              </svg>
            </Btn>
            <Btn label="Phase" className="w-[22px]">
              <svg viewBox="0 0 14 14" className="size-[14px]" fill="none" stroke="currentColor" strokeWidth="2">
                <circle cx="7" cy="7" r="4.5" />
                <path d="M1 13L13 1" strokeWidth="1.5" />
              </svg>
            </Btn>
          </div>
        </div>
      </Module>
      <Module title="TUNING" className="w-[100px]">
        <div className="relative flex flex-col items-center pt-[6px]">
          <svg className="absolute inset-0 size-full" stroke="#c3c5c7" strokeWidth="2"><path d="M35 60L24 108M65 60l11 48" /></svg>
          <Knob label="Tune" size="lg" value={0.5} />
          <div className="mt-[23px] flex gap-4">
            <Knob label="Octave" value={0.5} />
            <Knob label="Fine" value={0.5} />
          </div>
        </div>
      </Module>
      <Module title="FILTER" className="w-[115px]">
        <div className="relative flex h-[106px] pt-[6px]">
          <svg className="absolute inset-0 size-full" stroke="#c3c5c7" strokeWidth="2"><path d="M54 22l22-4M54 54l22 16" /></svg>
          <div className="flex w-[73px] flex-col">
            <Knob label="Cutoff" size="lg" />
            <Btn className="mt-1 w-[70px]">Active</Btn>
          </div>
          <div>
            <Knob label="Drive" />
            <Knob label="Res" />
          </div>
        </div>
        <div className="mt-[2px] flex flex-col gap-[2px] text-[#666d70]">
          <Select name="Filter type" value="SVF" className="w-[109px] bg-[#c9cccd]" />
          <Select name="Filter mode" value="LPF 2 pole" className="w-[109px] bg-[#c9cccd]" />
        </div>
      </Module>
      <Module title="PLAY" className="w-[60px]">
        <div className="flex flex-col items-center pt-[6px]">
          <Knob label="Pre delay" value={0} />
          <Knob label="Start Offset" value={0.5} />
          <Knob label="End Offset" value={0.5} />
        </div>
      </Module>
      <Module title="LOOPING" className="w-[115px]">
        <div className="flex w-[110px] flex-wrap justify-center gap-x-[22px] pt-[6px]">
          <Knob label="Start Offset" />
          <Knob label="End Offset" />
          <Knob label="X-Fade" />
          <Knob label="Curve" />
        </div>
        <Btn className="mt-[2px] w-[109px]">Release</Btn>
        <Btn className="mt-[2px] w-[109px]">Alternate</Btn>
      </Module>
      <Module title="TS" className="w-[50px]">
        <div className="flex w-11 flex-col items-center pt-[6px]">
          <Btn className="mb-3 w-full">Active</Btn>
          <Knob label="Amount" value={0.5} />
          <Btn className="mt-[20px] w-full">Fast</Btn>
          <Btn className="mt-[2px] w-full">Track</Btn>
        </div>
      </Module>
      <Module title="AMP ENVELOPE" className="w-[150px]">
        <div className="flex gap-1 pt-[5px] pl-[5px]">
          {ENV.map((e) => <EnvSlider key={e.name} {...e} />)}
          <div className="ml-1 flex flex-col pt-px">
            <Knob label="A-C" value={0.5} />
            <Knob label="D-C" value={0.5} />
            <Knob label="R-C" value={0.5} />
          </div>
        </div>
      </Module>
    </div>
  );
}

/* ---------- footer ---------- */

function ModSources() {
  return (
    <footer className="flex h-[28px] items-start pl-[5px] text-[11px]">
      <Btn tone="none" className="mr-[5px] h-5 w-10 bg-[#86c6ff]">Src</Btn>
      <div className="flex gap-[2px]">
        {MOD_SOURCES.map((m, i) => (
          <Btn key={i} tone="dark" className="w-[39px]">{m}</Btn>
        ))}
      </div>
      <div className="-mt-[6px] ml-auto flex pr-[7px] text-[10px] leading-[11px] text-[#6e7375]">
        {["Bass Mod", "High Pass", "No Perc", "Pitch mod"].map((k) => (
          <div key={k} className="flex w-[45px] flex-col items-center whitespace-nowrap">
            <MiniKnob name={k} className="text-[#535859]" />
            {k}
          </div>
        ))}
      </div>
    </footer>
  );
}

export default function App() {
  return (
    <div className="flex min-h-screen flex-col overflow-hidden border border-[#4a4c4e] bg-[#282d2e] font-['DejaVu_Sans_Condensed','Noto_Sans_CJK_JP',sans-serif] text-[12px] text-[#282d2e]">
      <TitleBar />
      <Header />
      <main className="grid flex-1 grid-cols-[485fr_897fr] gap-2 pr-[5px] pl-[5px]">
        <div className="flex min-w-0 flex-col">
          <BrowserPanel />
          <Dots />
          <PadSection />
        </div>
        <div className="relative flex min-w-0 flex-col">
          <div className="absolute top-[354px] -left-[6px]"><Dots vertical /></div>
          <PatternPanel />
          <Dots />
          <div className="flex flex-1">
            <LayerList />
            <div className="min-w-0 flex-1 bg-[#edf1f2] pt-[5px] pr-[5px] pl-[7px]">
              <SampleEditor />
              <div className="h-1" />
              <Parameters />
              <div className="mt-1 h-2 w-[81%] rounded-full bg-[#bbbcbe]" />
            </div>
          </div>
        </div>
      </main>
      <div className="h-2" />
      <ModSources />
    </div>
  );
}
